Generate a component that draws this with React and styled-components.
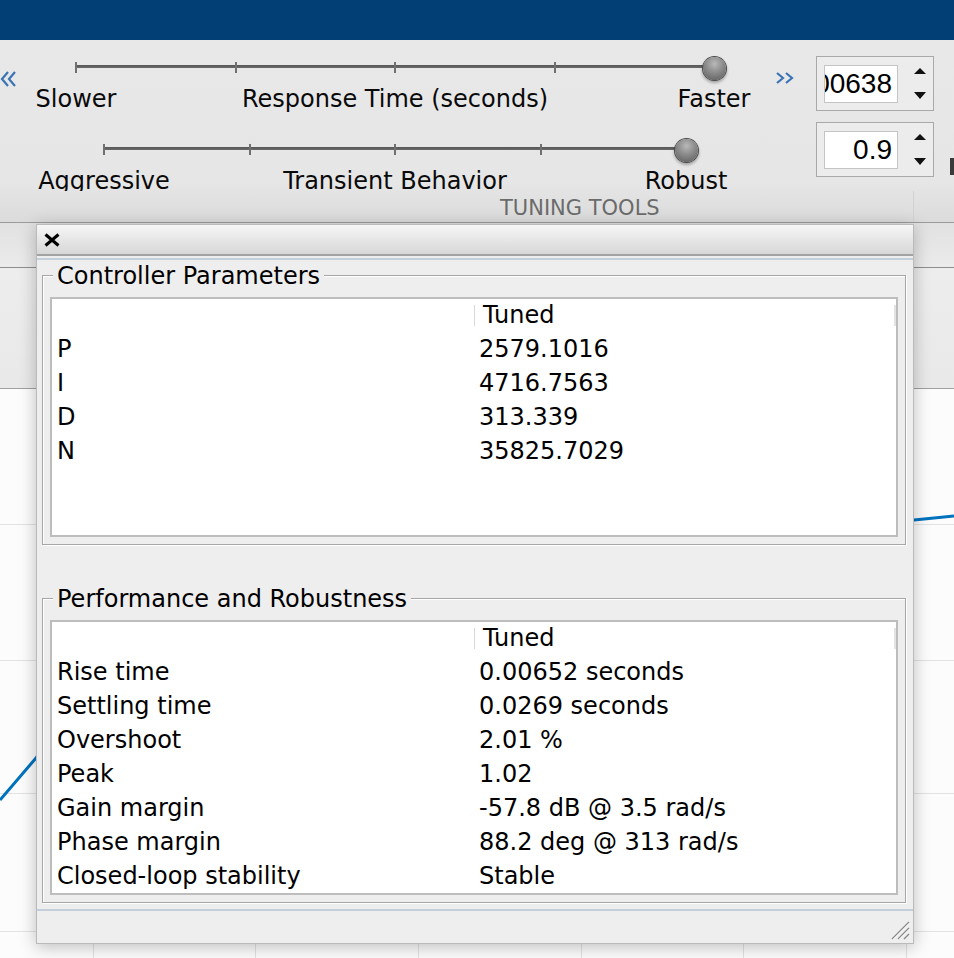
import React from "react";
import styled, { createGlobalStyle } from "styled-components";

const GlobalStyle = createGlobalStyle`
  html, body {
    margin: 0;
    padding: 0;
    background: #fcfcfc;
  }
  body {
    font-family: "DejaVu Sans", "Liberation Sans", sans-serif;
    color: #000;
  }
`;

// data ------------
const sliders = [
  { inset: 60, length: 638, labels: ["Slower", "Response Time (seconds)", "Faster"] },
  { inset: 88, length: 582, labels: ["Aggressive", "Transient Behavior", "Robust"] },
];

const spinners = ["0.00638", "0.9"];

const controllerRows = [
  ["P", "2579.1016"],
  ["I", "4716.7563"],
  ["D", "313.339"],
  ["N", "35825.7029"],
];

const performanceRows = [
  ["Rise time", "0.00652 seconds"],
  ["Settling time", "0.0269 seconds"],
  ["Overshoot", "2.01 %"],
  ["Peak", "1.02"],
  ["Gain margin", "-57.8 dB @ 3.5 rad/s"],
  ["Phase margin", "88.2 deg @ 313 rad/s"],
  ["Closed-loop stability", "Stable"],
];

const gridRows = [135, 271, 404, 542];
const gridCols = [93, 255, 418, 581, 743, 906];

function SliderControl({ inset, length, labels }) {
  return (
    <SliderBlock $inset={inset} $length={length}>
      <Track>
        <Stop><Tick /></Stop>
        <Stop><Tick /></Stop>
        <Stop><Tick /></Stop>
        <Stop><Tick /></Stop>
        <Stop><Knob /></Stop>
      </Track>
      <LabelRow>
        {labels.map((label) => (
          <LabelAnchor key={label}>
            <span>{label}</span>
          </LabelAnchor>
        ))}
      </LabelRow>
    </SliderBlock>
  );
}

function DataTable({ rows, height }) {
  return (
    <Table $height={height}>
      <span />
      <HeaderCell>Tuned</HeaderCell>
      {rows.map(([name, value]) => (
        <React.Fragment key={name}>
          <Cell>{name}</Cell>
          <Cell>{value}</Cell>
        </React.Fragment>
      ))}
    </Table>
  );
}

function App() {
  return (
    <Page>
      <GlobalStyle />
      <TitleStrip />
      <Toolstrip>
        <ToolRow>
          <Chevron width="16" height="18" viewBox="0 0 16 18" $top={30}>
            <polyline points="8,2 2,9 8,16" />
            <polyline points="15,2 9,9 15,16" />
          </Chevron>
          <SliderStack>
            {sliders.map((s) => (
              <SliderControl key={s.labels[0]} {...s} />
            ))}
          </SliderStack>
          <Chevron width="20" height="12" viewBox="0 0 20 12" $top={32} $left={5}>
            <polyline points="2,1 8,6 2,11" />
            <polyline points="11,1 17,6 11,11" />
          </Chevron>
          <SpinnerColumn>
            {spinners.map((v) => (
              <Spinner key={v}>
                <SpinField>
                  <span>{v}</span>
                </SpinField>
                <ArrowStack>
                  <Arrow $up />
                  <Arrow />
                </ArrowStack>
              </Spinner>
            ))}
          </SpinnerColumn>
          <EdgeStub />
        </ToolRow>
        <SectionFooter>
          <SectionLabel>TUNING TOOLS</SectionLabel>
        </SectionFooter>
      </Toolstrip>

      <Workspace>
        <TabBand />
        <InfoBand />
        <PlotArea>
          <svg width="954" height="569" viewBox="0 0 954 569">
            {gridRows.map((y) => (
              <line key={"r" + y} x1="0" x2="954" y1={y + 0.5} y2={y + 0.5} stroke="#e2e2e2" />
            ))}
            {gridCols.map((x) => (
              <line key={"c" + x} x1={x + 0.5} x2={x + 0.5} y1="0" y2="569" stroke="#e2e2e2" />
            ))}
            <path
              d="M0 411 L36 369 C120 260 200 140 330 128 S700 132 914 131 L954 127"
              fill="none"
              stroke="#0072bd"
              strokeWidth="3"
            />
          </svg>
        </PlotArea>

        <Panel>
          <PanelTitleBar>
            <svg width="16" height="14" viewBox="0 0 16 14">
              <path d="M1.5 1.5 L14.5 12.5 M14.5 1.5 L1.5 12.5" stroke="#000" strokeWidth="3" />
            </svg>
          </PanelTitleBar>
          <AccentRule $gap={2} />
          <PanelBody>
            <GroupBox $gap={0}>
              <legend>Controller Parameters</legend>
              <DataTable rows={controllerRows} height={240} />
            </GroupBox>
            <GroupBox $gap={38}>
              <legend>Performance and Robustness</legend>
              <DataTable rows={performanceRows} />
            </GroupBox>
          </PanelBody>
          <AccentRule $gap={6} />
          <PanelFooter>
            <svg width="20" height="20" viewBox="0 0 20 20">
              <path d="M2 19 L19 2 M8 19 L19 8 M14 19 L19 14" stroke="#8a8a8a" strokeWidth="1.4" />
              <path d="M3 19.5 L19.5 3 M9 19.5 L19.5 9" stroke="#ffffff" strokeWidth="0.8" />
            </svg>
          </PanelFooter>
        </Panel>
      </Workspace>
    </Page>
  );
}

// styles ------------
const Page = styled.div`
  width: 954px;
  height: 958px;
  display: flex;
  flex-direction: column;
  overflow: hidden;
`;

const TitleStrip = styled.div`
  flex: none;
  height: 40px;
  background: #023f74;
`;

const Toolstrip = styled.div`
  flex: none;
  box-sizing: border-box;
  height: 183px;
  display: flex;
  flex-direction: column;
  background: linear-gradient(to bottom, #e8e8e8 0%, #e6e6e6 78%, #dbdbdb 100%);
  border-bottom: 1px solid #9c9c9c;
`;

const ToolRow = styled.div`
  flex: none;
  height: 151px;
  display: flex;
  align-items: flex-start;
`;

const Chevron = styled.svg`
  flex: none;
  display: block;
  margin-top: ${(p) => p.$top}px;
  margin-left: ${(p) => p.$left || 0}px;
  fill: none;
  stroke: #3a74b4;
  stroke-width: 2.2;
`;

const SliderStack = styled.div`
  flex: none;
  box-sizing: border-box;
  width: 754px;
  height: 151px;
  padding-top: 15px;
  overflow: hidden;
  display: flex;
  flex-direction: column;
`;

const SliderBlock = styled.div`
  flex: none;
  width: ${(p) => p.$length}px;
  margin-left: ${(p) => p.$inset}px;

  & + & {
    margin-top: 24px;
  }
`;

const Track = styled.div`
  height: 24px;
  display: flex;
  justify-content: space-between;
  align-items: center;
  background: linear-gradient(
    to bottom,
    transparent 10px,
    #575757 10px,
    #6a6a6a 13px,
    transparent 13px
  );
`;

const Stop = styled.div`
  width: 0;
  height: 100%;
  display: flex;
  justify-content: center;
  align-items: center;
`;

const Tick = styled.div`
  flex: none;
  width: 2px;
  height: 11px;
  background: #707070;
`;

const Knob = styled.div`
  flex: none;
  width: 23px;
  height: 23px;
  margin-top: 3px;
  border-radius: 50%;
  background: radial-gradient(circle at 50% 30%, #b9b9b9 0%, #8d8d8d 42%, #595959 100%);
  box-shadow: 0 0 0 1px #4c4c4c, 0 2px 3px 1px rgba(0, 0, 0, 0.3);
`;

const LabelRow = styled.div`
  margin-top: 6px;
  height: 28px;
  display: flex;
  justify-content: space-between;
  font-size: 24px;
  line-height: 28px;
  white-space: nowrap;
  color: #0a0a0a;
`;

const LabelAnchor = styled.div`
  width: 0;
  display: flex;
  justify-content: center;

  span {
    flex: none;
  }
`;

const SpinnerColumn = styled.div`
  flex: none;
  margin-left: 21px;
  margin-top: 16px;
  display: flex;
  flex-direction: column;
  gap: 11px;
`;

const Spinner = styled.div`
  box-sizing: border-box;
  width: 118px;
  height: 55px;
  padding-left: 7px;
  display: flex;
  align-items: center;
  background: #ececec;
  border: 1px solid #a9a9a9;
`;

const SpinField = styled.div`
  box-sizing: border-box;
  width: 74px;
  height: 38px;
  padding-right: 5px;
  display: flex;
  justify-content: flex-end;
  align-items: center;
  overflow: hidden;
  background: #ffffff;
  border: 1px solid #c4c4c4;
  font-family: "Liberation Sans", Arial, sans-serif;
  font-size: 28px;

  span {
    flex: none;
    white-space: nowrap;
  }
`;

const ArrowStack = styled.div`
  height: 31px;
  margin-left: 16px;
  display: flex;
  flex-direction: column;
  justify-content: space-between;
`;

const Arrow = styled.div`
  width: 0;
  height: 0;
  border-left: 6.5px solid transparent;
  border-right: 6.5px solid transparent;
  ${(p) =>
    p.$up ? "border-bottom: 6px solid #111;" : "border-top: 7px solid #111;"}
`;

const EdgeStub = styled.div`
  flex: none;
  width: 6px;
  height: 17px;
  margin-left: 16px;
  margin-top: 118px;
  background: #3a3a3a;
`;

const SectionFooter = styled.div`
  flex: 1;
  width: 913px;
  border-right: 1px solid #d2d2d2;
`;

const SectionLabel = styled.div`
  margin-top: 5px;
  padding-left: 500px;
  font-size: 21px;
  line-height: 24px;
  color: #6b6b6b;
`;

const Workspace = styled.div`
  flex: 1;
  position: relative;
  display: flex;
  flex-direction: column;
`;

const TabBand = styled.div`
  flex: none;
  box-sizing: border-box;
  height: 45px;
  background: linear-gradient(to bottom, #e1e1e1, #ebebeb);
  border-bottom: 1px solid #8e8e8e;
`;

const InfoBand = styled.div`
  flex: none;
  box-sizing: border-box;
  height: 121px;
  background: linear-gradient(to bottom, #ededed, #e9e9e9);
  border-bottom: 1px solid #a0a0a0;
`;

const PlotArea = styled.div`
  flex: 1;
  background: #fcfcfc;

  svg {
    display: block;
  }
`;

const Panel = styled.div`
  position: absolute;
  top: 1px;
  left: 36px;
  box-sizing: border-box;
  width: 878px;
  height: 720px;
  display: flex;
  flex-direction: column;
  background: #eeeeee;
  border: 1px solid #bababa;
  box-shadow: 0 3px 16px rgba(0, 0, 0, 0.25);
`;

const PanelTitleBar = styled.div`
  flex: none;
  box-sizing: border-box;
  height: 31px;
  padding-left: 7px;
  display: flex;
  align-items: center;
  background: linear-gradient(to bottom, #f6f6f6, #d7d7d7);
  border-bottom: 2px solid #a2a2a2;

  svg {
    display: block;
  }
`;

const AccentRule = styled.div`
  flex: none;
  height: 2px;
  margin-top: ${(p) => p.$gap}px;
  background: #c3cfdb;
`;

const PanelBody = styled.div`
  flex: none;
  padding: 0 7px 0 5px;
  display: flex;
  flex-direction: column;
`;

const GroupBox = styled.fieldset`
  margin: ${(p) => p.$gap}px 0 0;
  padding: 7px 7px 7px;
  min-width: 0;
  border: 1px solid #a7a7a7;
  box-shadow: inset 1px 1px 0 #ffffff, 1px 1px 0 #ffffff;

  legend {
    margin-left: 3px;
    padding: 2px 4px 0;
    font-size: 24px;
    line-height: 28px;
    background: #eeeeee;
    color: #000;
  }
`;

const Table = styled.div`
  box-sizing: border-box;
  ${(p) => (p.$height ? `height: ${p.$height}px;` : "")}
  display: grid;
  grid-template-columns: 422px 1fr;
  grid-template-rows: 33px;
  grid-auto-rows: 34px;
  align-content: start;
  background: #ffffff;
  border: 2px solid #bdbdbd;
  font-size: 24px;
  line-height: 34px;
  white-space: nowrap;
`;

const HeaderCell = styled.div`
  margin: 6px 0;
  padding-left: 8px;
  line-height: 21px;
  border-left: 1px solid #d8d8d8;
  border-right: 2px solid #e3e3e3;
`;

const Cell = styled.div`
  padding-left: 5px;
`;

const PanelFooter = styled.div`
  flex: 1;
  display: flex;
  justify-content: flex-end;
  align-items: flex-end;
  padding: 0 3px 3px 0;

  svg {
    display: block;
  }
`;

export default App;
